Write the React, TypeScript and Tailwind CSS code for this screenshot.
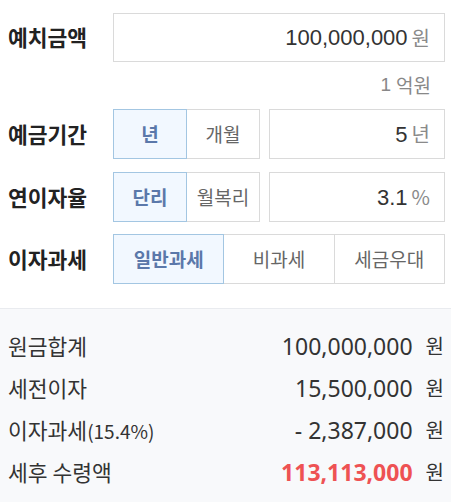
import React from 'react'

const kr = "font-['Noto_Sans_CJK_KR',sans-serif]"
const arial = "font-['Liberation_Sans','Noto_Sans_CJK_KR',sans-serif]"

function Seg({ items, active }: { items: string[]; active: number }) {
  return (
    <div className="flex h-full flex-1">
      {items.map((t, i) => (
        <button
          key={t}
          className={
            'flex-1 h-full flex items-center justify-center border text-[19px] ' +
            (i > 0 ? '-ml-px ' : '') +
            (i === active
              ? 'relative z-10 border-[#a3c6e2] bg-[#f2f8ff] text-[#5b78aa] font-bold'
              : 'border-[#dadada] bg-white text-[#666]')
          }
        >
          {t}
        </button>
      ))}
    </div>
  )
}

function ValueBox({ value, unit }: { value: string; unit: string }) {
  return (
    <div className="flex-1 h-full border border-[#dadada] bg-white flex items-center justify-end pr-[14px] gap-[4px]">
      <span className={`${arial} text-[22px] text-[#333]`}>{value}</span>
      <span className="text-[20px] text-[#8a8a8a]">{unit}</span>
    </div>
  )
}

function Label({ children }: { children: React.ReactNode }) {
  return <div className="w-[105px] shrink-0 text-[21.5px] font-bold text-[#222]">{children}</div>
}

function ResultRow({ label, value, red }: { label: React.ReactNode; value: string; red?: boolean }) {
  return (
    <div className="h-[42px] flex items-center">
      <div className="flex-1 text-[21.5px] text-[#333]">{label}</div>
      <span className={`font-['Noto_Sans',sans-serif] text-[23px] ${red ? 'text-[#ee5253] font-bold' : 'text-[#333]'}`}>{value}</span>
      <span className="ml-[13px] text-[20px] text-[#333]">원</span>
    </div>
  )
}

export default function App() {
  return (
    <div className={`${kr} w-[451px] h-[502px] bg-white overflow-hidden`}>
      <div className="pl-[8px] pr-[6px] pt-[13px] pb-[24px]">
        <div className="flex items-center h-[49px]">
          <Label>예치금액</Label>
          <ValueBox value="100,000,000" unit="원" />
        </div>
        <div className="h-[47px] flex items-center justify-end pr-[14px] text-[19px] text-[#888]">
          <span className={arial}>1</span>
          <span className="ml-[5px]">억원</span>
        </div>
        <div className="flex items-center h-[50px]">
          <Label>예금기간</Label>
          <div className="w-[147px] h-full flex">
            <Seg items={['년', '개월']} active={0} />
          </div>
          <div className="ml-[9px] flex-1 h-full flex">
            <ValueBox value="5" unit="년" />
          </div>
        </div>
        <div className="flex items-center h-[50px] mt-[13px]">
          <Label>연이자율</Label>
          <div className="w-[147px] h-full flex">
            <Seg items={['단리', '월복리']} active={0} />
          </div>
          <div className="ml-[9px] flex-1 h-full flex">
            <ValueBox value="3.1" unit="%" />
          </div>
        </div>
        <div className="flex items-center h-[50px] mt-[12px]">
          <Label>이자과세</Label>
          <Seg items={['일반과세', '비과세', '세금우대']} active={0} />
        </div>
      </div>
      <div className="border-t border-[#e9ebef] bg-[#f8f9fb] pl-[8px] pr-[7px] pt-[16px] pb-[12px]">
        <ResultRow label="원금합계" value="100,000,000" />
        <ResultRow label="세전이자" value="15,500,000" />
        <ResultRow label={<>이자과세<span className="text-[19px]">(15.4%)</span></>} value="- 2,387,000" />
        <ResultRow label="세후 수령액" value="113,113,000" red />
      </div>
    </div>
  )
}
